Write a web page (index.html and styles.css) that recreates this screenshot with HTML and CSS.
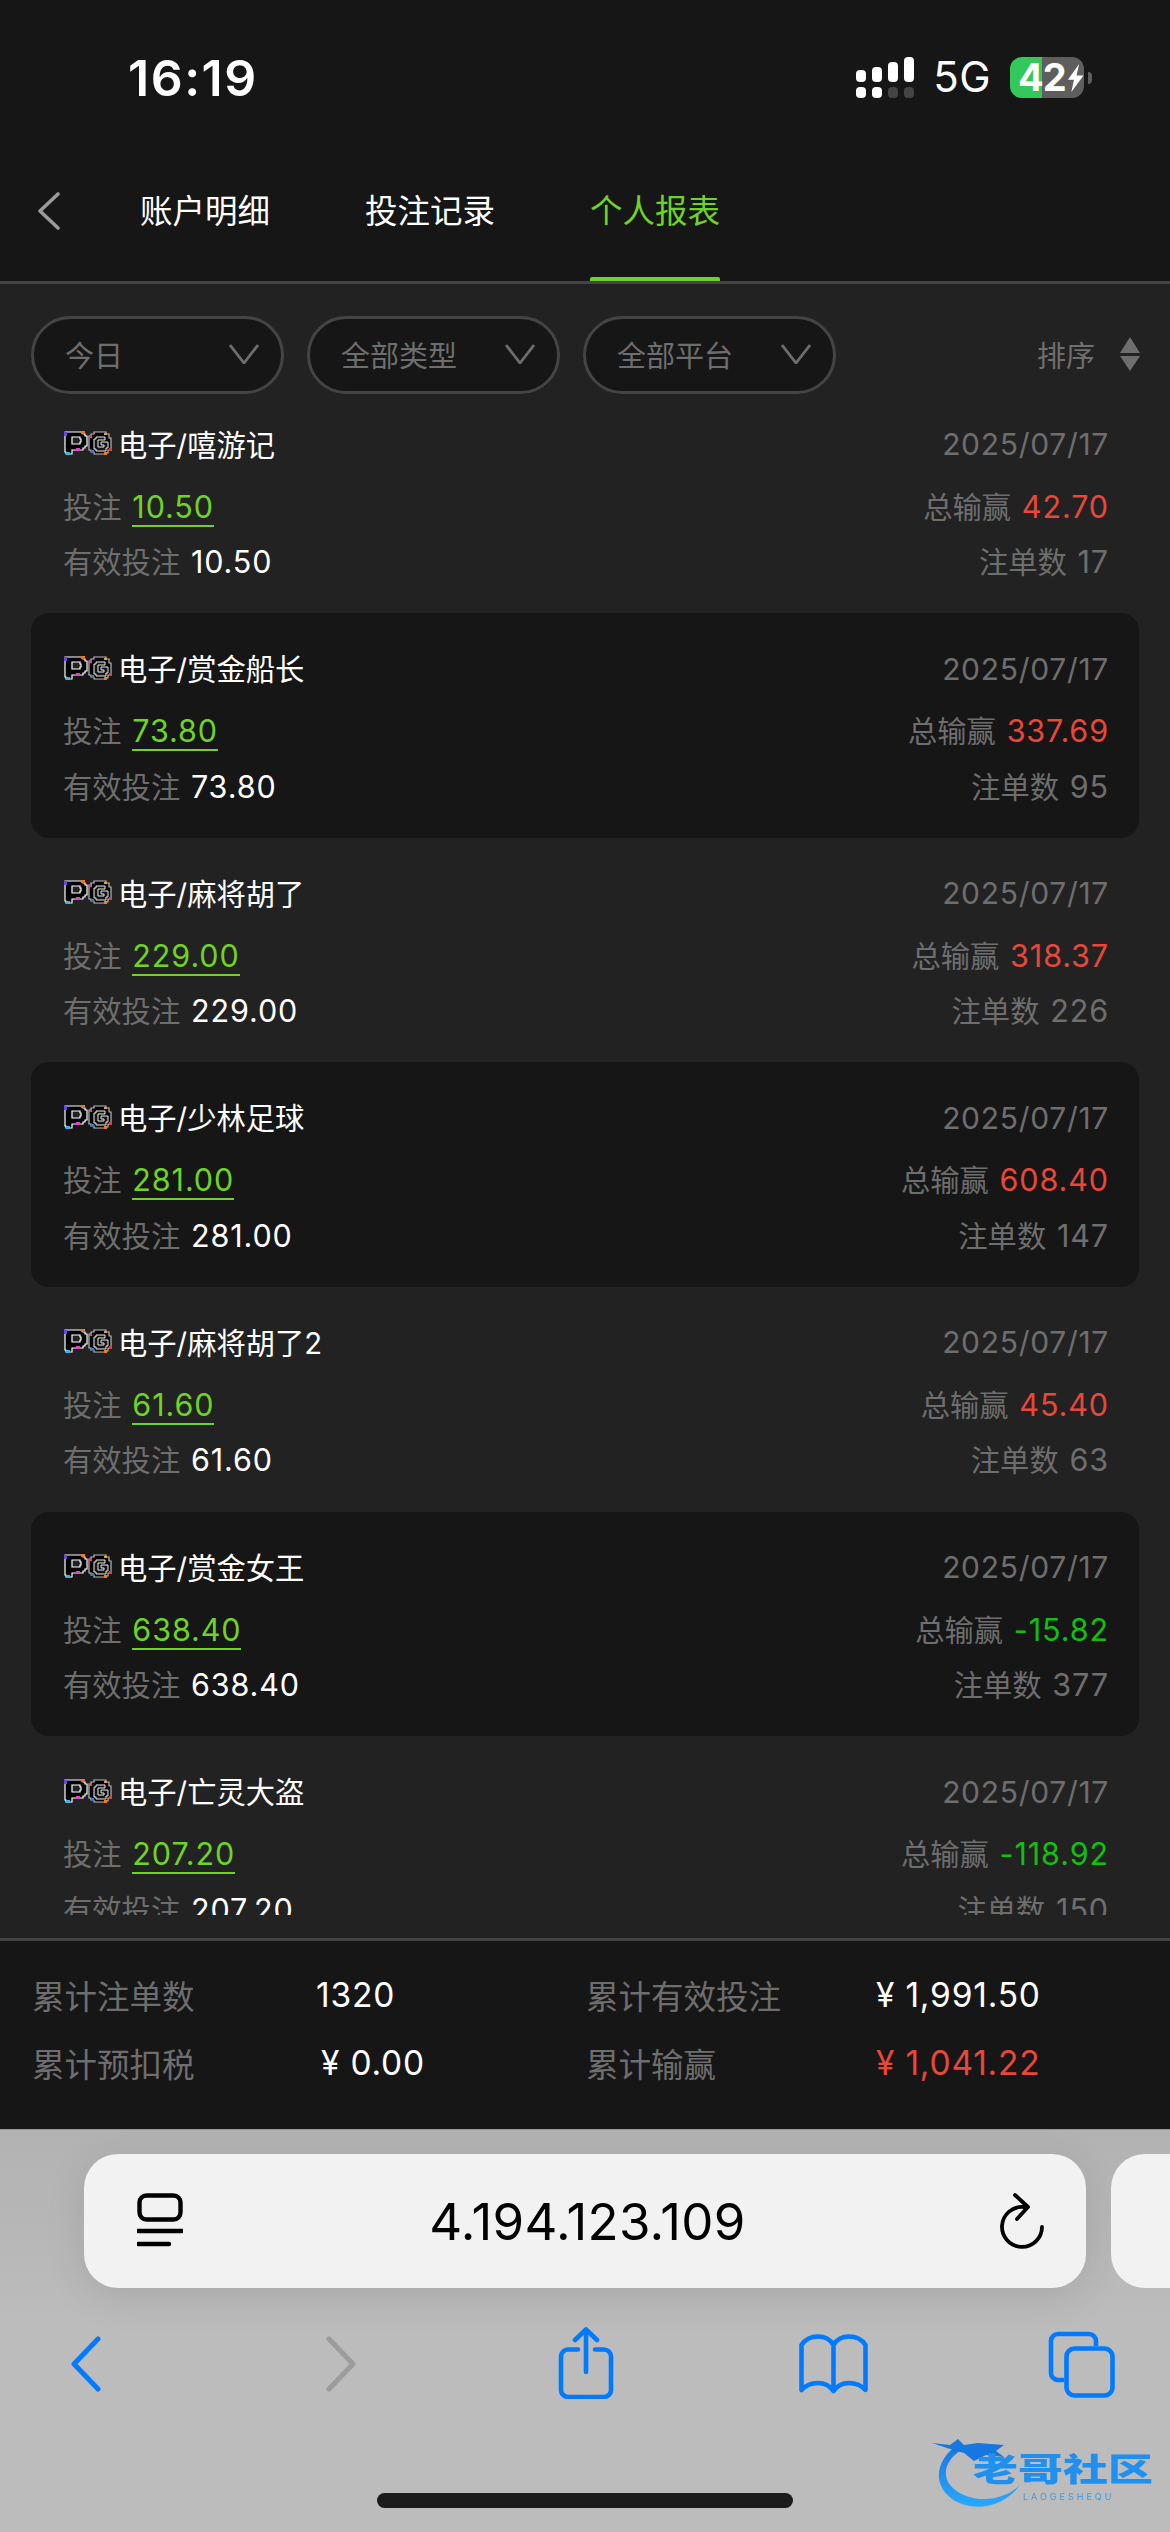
FILE: index.html
```html
<!DOCTYPE html>
<html lang="zh-CN">
<head>
<meta charset="utf-8">
<title>个人报表</title>
<link rel="stylesheet" href="styles.css">
</head>
<body>
<svg class="defs" width="0" height="0" aria-hidden="true">
  <defs>
    <symbol id="pg" viewBox="0 0 49 25">
      <path d="M2 2h18v2h2v2h2v10h-2v2h-2v2H9v4H3v-2H2z" fill="#000" stroke="#fff" stroke-width="1.2"/>
      <path d="M9 7h8v2h1v3h-1v2H9z" fill="#222" stroke="#fff" stroke-width="1.2"/>
      <path d="M31 2h12v2h3v4h2v12h-3v3h-3v1H31v-2h-3v-2h-2V6h2V4h3z" fill="#000" stroke="#bbb" stroke-width="1.2"/>
      <path d="M33 7h9v3h-7v7h6v-2h-3v-3h7v6h-2v3H33v-2h-2V9h2z" fill="#161616" stroke="#eee" stroke-width="1"/>
      <rect x="1" y="2" width="3" height="4" fill="#7a3df0"/>
      <rect x="18" y="1" width="4" height="3" fill="#f07a1a"/>
      <rect x="13" y="18" width="4" height="3" fill="#e83fd0"/>
      <rect x="3" y="22" width="4" height="3" fill="#38b6f0"/>
      <rect x="26" y="5" width="3" height="3" fill="#e83f9a"/>
      <rect x="28" y="20" width="3" height="3" fill="#2f7ae8"/>
      <rect x="46" y="18" width="3" height="3" fill="#e8402f"/>
      <rect x="41" y="22" width="3" height="3" fill="#f07a1a"/>
      <rect x="41" y="3" width="3" height="2" fill="#f0a01a"/>
    </symbol>
    <symbol id="chev" viewBox="0 0 30 20">
      <path d="M1 1 15 19 29 1" fill="none" stroke="#6e6e6e" stroke-width="2.8"/>
    </symbol>
    <linearGradient id="wm" x1="0" y1="0" x2="0" y2="1">
      <stop offset="0" stop-color="#1677e0"/>
      <stop offset="1" stop-color="#2aa8ff"/>
    </linearGradient>
  </defs>
</svg>

<div class="app-top">
  <div class="status">
    <span class="clock">16:19</span>
    <div class="status-right">
      <div class="signal">
        <div class="sig-col"><i class="s1"></i><b></b></div>
        <div class="sig-col"><i class="s2"></i><b></b></div>
        <div class="sig-col"><i class="s3"></i><b class="off"></b></div>
        <div class="sig-col"><i class="s4"></i><b class="off"></b></div>
      </div>
      <span class="net">5G</span>
      <div class="battery">
        <span class="batt-num">42</span>
        <svg class="bolt" width="20" height="32" viewBox="0 0 20 32"><path d="M14 0 1 18h7L5 32 19 13h-8z" fill="#fff"/></svg>
      </div>
      <span class="batt-tip"></span>
    </div>
  </div>
  <nav class="tabs">
    <svg class="back" width="24" height="38" viewBox="0 0 24 38"><path d="M21 2 3 19l18 17" fill="none" stroke="#9a9a9a" stroke-width="3.6" stroke-linecap="round" stroke-linejoin="round"/></svg>
    <a class="tab">账户明细</a>
    <a class="tab">投注记录</a>
    <a class="tab active">个人报表</a>
  </nav>
</div>

<div class="filters">
  <div class="pill"><span>今日</span><svg width="30" height="20"><use href="#chev"/></svg></div>
  <div class="pill"><span>全部类型</span><svg width="30" height="20"><use href="#chev"/></svg></div>
  <div class="pill"><span>全部平台</span><svg width="30" height="20"><use href="#chev"/></svg></div>
  <div class="sort">
    <span>排序</span>
    <svg width="20" height="34" viewBox="0 0 20 34"><path d="M10 0 20 16H0zM0 19h20L10 34z" fill="#6e6e6e"/></svg>
  </div>
</div>

<div class="list-wrap">
  <div class="list">
    <div class="list-inner">
      <section class="row">
        <div class="line head"><div class="title"><svg class="pg" width="49" height="25"><use href="#pg"/></svg><span>电子/嘻游记</span></div><span class="muted date">2025/07/17</span></div>
        <div class="line bet"><div><span class="muted">投注 </span><span class="num stake">10.50</span></div><div><span class="muted">总输赢 </span><span class="num win">42.70</span></div></div>
        <div class="line valid"><div><span class="muted">有效投注 </span><span class="num white">10.50</span></div><div class="muted">注单数 <span class="num">17</span></div></div>
      </section>
      <section class="row card">
        <div class="line head"><div class="title"><svg class="pg" width="49" height="25"><use href="#pg"/></svg><span>电子/赏金船长</span></div><span class="muted date">2025/07/17</span></div>
        <div class="line bet"><div><span class="muted">投注 </span><span class="num stake">73.80</span></div><div><span class="muted">总输赢 </span><span class="num win">337.69</span></div></div>
        <div class="line valid"><div><span class="muted">有效投注 </span><span class="num white">73.80</span></div><div class="muted">注单数 <span class="num">95</span></div></div>
      </section>
      <section class="row">
        <div class="line head"><div class="title"><svg class="pg" width="49" height="25"><use href="#pg"/></svg><span>电子/麻将胡了</span></div><span class="muted date">2025/07/17</span></div>
        <div class="line bet"><div><span class="muted">投注 </span><span class="num stake">229.00</span></div><div><span class="muted">总输赢 </span><span class="num win">318.37</span></div></div>
        <div class="line valid"><div><span class="muted">有效投注 </span><span class="num white">229.00</span></div><div class="muted">注单数 <span class="num">226</span></div></div>
      </section>
      <section class="row card">
        <div class="line head"><div class="title"><svg class="pg" width="49" height="25"><use href="#pg"/></svg><span>电子/少林足球</span></div><span class="muted date">2025/07/17</span></div>
        <div class="line bet"><div><span class="muted">投注 </span><span class="num stake">281.00</span></div><div><span class="muted">总输赢 </span><span class="num win">608.40</span></div></div>
        <div class="line valid"><div><span class="muted">有效投注 </span><span class="num white">281.00</span></div><div class="muted">注单数 <span class="num">147</span></div></div>
      </section>
      <section class="row">
        <div class="line head"><div class="title"><svg class="pg" width="49" height="25"><use href="#pg"/></svg><span>电子/麻将胡了2</span></div><span class="muted date">2025/07/17</span></div>
        <div class="line bet"><div><span class="muted">投注 </span><span class="num stake">61.60</span></div><div><span class="muted">总输赢 </span><span class="num win">45.40</span></div></div>
        <div class="line valid"><div><span class="muted">有效投注 </span><span class="num white">61.60</span></div><div class="muted">注单数 <span class="num">63</span></div></div>
      </section>
      <section class="row card">
        <div class="line head"><div class="title"><svg class="pg" width="49" height="25"><use href="#pg"/></svg><span>电子/赏金女王</span></div><span class="muted date">2025/07/17</span></div>
        <div class="line bet"><div><span class="muted">投注 </span><span class="num stake">638.40</span></div><div><span class="muted">总输赢 </span><span class="num loss">-15.82</span></div></div>
        <div class="line valid"><div><span class="muted">有效投注 </span><span class="num white">638.40</span></div><div class="muted">注单数 <span class="num">377</span></div></div>
      </section>
      <section class="row">
        <div class="line head"><div class="title"><svg class="pg" width="49" height="25"><use href="#pg"/></svg><span>电子/亡灵大盗</span></div><span class="muted date">2025/07/17</span></div>
        <div class="line bet"><div><span class="muted">投注 </span><span class="num stake">207.20</span></div><div><span class="muted">总输赢 </span><span class="num loss">-118.92</span></div></div>
        <div class="line valid"><div><span class="muted">有效投注 </span><span class="num white">207.20</span></div><div class="muted">注单数 <span class="num">150</span></div></div>
      </section>
    </div>
  </div>
</div>

<div class="totals">
  <span class="t-label">累计注单数</span><span class="t-val">1320</span>
  <span class="t-label">累计有效投注</span><span class="t-val">¥ 1,991.50</span>
  <span class="t-label">累计预扣税</span><span class="t-val t-tax">¥ 0.00</span>
  <span class="t-label">累计输赢</span><span class="t-val t-red">¥ 1,041.22</span>
</div>

<div class="browser">
  <div class="url-row">
    <div class="url-bar">
      <svg width="46" height="56" viewBox="0 0 46 56"><rect x="2.5" y="2.5" width="41" height="24" rx="7" fill="none" stroke="#000" stroke-width="4.4"/><path d="M1 38h44M1 51h31" stroke="#000" stroke-width="4.4" stroke-linecap="round"/></svg>
      <span class="url-text">4.194.123.109</span>
      <svg width="46" height="56" viewBox="0 0 46 56"><path d="M24 14A20 20 0 1 0 42 34" fill="none" stroke="#000" stroke-width="3.8" stroke-linecap="round"/><path d="M15 2 28 14 17 26" fill="none" stroke="#000" stroke-width="3.8" stroke-linecap="round" stroke-linejoin="round"/></svg>
    </div>
    <div class="url-next"></div>
  </div>
  <div class="tools">
    <svg class="t-back" width="30" height="72" viewBox="0 0 30 72"><path d="M27 12 3 37l24 25" fill="none" stroke="#007aff" stroke-width="5" stroke-linecap="round" stroke-linejoin="round"/></svg>
    <svg class="t-fwd" width="30" height="72" viewBox="0 0 30 72"><path d="M3 12 27 37 3 62" fill="none" stroke="#9c9c9c" stroke-width="5" stroke-linecap="round" stroke-linejoin="round"/></svg>
    <svg class="t-share" width="56" height="72" viewBox="0 0 56 72"><path d="M20 22.5H10a7 7 0 0 0-7 7V63a7 7 0 0 0 7 7h36a7 7 0 0 0 7-7V29.5a7 7 0 0 0-7-7H37M28 45V3M17 13 28 2.500 39 13" fill="none" stroke="#007aff" stroke-width="4.6" stroke-linecap="round" stroke-linejoin="round"/></svg>
    <svg class="t-book" width="71" height="72" viewBox="0 0 71 72"><path d="M3.500 63V18C8 11 14 9.500 20 9.500 27 9.500 32 12 35.500 18 39 12 44 9.500 51 9.500 57 9.500 63 11 67.500 18V63C63 58 57 56 51 56 44 56 39 59 35.500 64 32 59 27 56 20 56 14 56 8 58 3.500 63ZM35.500 18V64" fill="none" stroke="#007aff" stroke-width="4.6" stroke-linejoin="round"/></svg>
    <svg class="t-tabs" width="68" height="72" viewBox="0 0 68 72"><rect x="18.500" y="21.500" width="46" height="47" rx="8" fill="none" stroke="#007aff" stroke-width="4.6"/><path d="M16 53H10a7 7 0 0 1-7-7V14a7 7 0 0 1 7-7H41a7 7 0 0 1 7 7v5" fill="none" stroke="#007aff" stroke-width="4.6"/></svg>
  </div>
  <div class="home-bar"></div>
  <div class="mark">
    <svg width="225" height="78" viewBox="0 0 225 78"><path d="M28 12C8 24 0 50 22 66 40 78 70 78 90 52 72 70 40 70 24 56 10 44 14 26 36 14Z" fill="url(#wm)"/><path d="M2 10 20 12 28 6 34 12 48 10 74 12 66 18 74 24 56 22 44 28 34 20 20 16Z" fill="#1677e0"/></svg>
    <span class="mark-cn">老哥社区</span>
    <span class="mark-en">LAOGESHEQU</span>
  </div>
</div>
</body>
</html>
```
FILE: styles.css
```css
* { box-sizing: border-box; }

html, body { margin: 0; padding: 0; }

body {
  width: 1170px;
  height: 2532px;
  overflow: hidden;
  display: flex;
  flex-direction: column;
  background: #bcbcbc;
  color: #fff;
  font-family: Inter, "Noto Sans CJK SC", sans-serif;
}

.defs { position: absolute; }

/* status bar and page tabs */
.app-top {
  height: 284px;
  background: #161616;
  border-bottom: 3px solid #444;
  flex: none;
}

.status {
  height: 158px;
  display: flex;
  justify-content: space-between;
  padding: 44px 78px 0 128px;
}

.clock {
  font-size: 50px;
  font-weight: 600;
  line-height: 68px;
  letter-spacing: 1.500px;
}

.status-right {
  display: flex;
  align-items: flex-start;
  padding-top: 13px;
}

.signal { display: flex; gap: 6px; height: 41px; align-items: flex-end; }

.sig-col { display: flex; flex-direction: column; gap: 5px; width: 10px; }

.sig-col i { display: block; background: #fff; border-radius: 4px; }
.sig-col b { display: block; height: 11px; background: #fff; border-radius: 4px; }
.sig-col b.off { background: #444; }
.s1 { height: 12px; }
.s2 { height: 15px; }
.s3 { height: 20px; }
.s4 { height: 25px; }

.net {
  margin-left: 19px;
  font-size: 42px;
  line-height: 42px;
  margin-top: -1px;
  letter-spacing: 0.500px;
}

.battery {
  margin-left: 19px;
  width: 74px;
  height: 41px;
  border-radius: 12px;
  background: linear-gradient(90deg, #34c759 32px, #5e5e5e 32px);
  display: flex;
  align-items: center;
  padding-left: 8px;
  flex: none;
}

.batt-num {
  font-size: 38px;
  font-weight: 700;
  line-height: 41px;
  letter-spacing: -1px;
}

.bolt { margin-left: 1px; }

.batt-tip {
  width: 4px;
  height: 12px;
  margin: 15px 0 0 4px;
  background: #5e5e5e;
  border-radius: 0 6px 6px 0;
}

.tabs {
  height: 123px;
  display: flex;
  align-items: flex-start;
  padding-left: 37px;
  font-size: 32.500px;
}

.back { margin-top: 34px; margin-right: 79px; }

.tab {
  position: relative;
  width: 130px;
  margin-right: 95px;
  line-height: 44px;
  margin-top: 32px;
  height: 91px;
  white-space: nowrap;
}

.tab.active { color: #6fd325; }

.tab.active::after {
  content: "";
  position: absolute;
  left: 0;
  right: 0;
  bottom: 0;
  height: 4px;
  border-radius: 2px 2px 0 0;
  background: #6fd325;
}

/* filter row */
.filters {
  height: 132px;
  flex: none;
  background: #222;
  display: flex;
  align-items: flex-start;
  gap: 23px;
  padding: 32px 30px 0 31px;
}

.pill {
  width: 253px;
  height: 78px;
  background: #161616;
  border: 3px solid #444;
  border-radius: 39px;
  display: flex;
  align-items: center;
  justify-content: space-between;
  padding: 0 22px 3px 31px;
  font-size: 29px;
  color: #6e6e6e;
}

.sort {
  margin-left: auto;
  height: 78px;
  display: flex;
  align-items: center;
  gap: 25px;
  font-size: 29px;
  color: #6e6e6e;
  padding-bottom: 3px;
}

/* record list */
.list-wrap {
  height: 1522px;
  flex: none;
  background: #222;
  padding-bottom: 23px;
}

.list { height: 100%; overflow: hidden; }

.list-inner { margin-top: -27.400px; }

.row {
  height: 224.600px;
  margin: 0 31px;
  padding: 34px 30px 0 32px;
  border-radius: 18px;
  font-size: 29.300px;
}

.card { background: #161616; }

.line {
  display: flex;
  justify-content: space-between;
  align-items: center;
}

.head { height: 40px; }
.bet { height: 44px; margin-top: 20px; }
.valid { height: 44px; margin-top: 11.500px; }

.title { display: flex; align-items: center; }
.pg { margin-right: 6px; }

.muted { color: #6e6e6e; }
.date { font-size: 30px; letter-spacing: 0.700px; padding-top: 3px; }
.num { font-size: 30.500px; letter-spacing: 0.900px; margin-left: 2.500px; }
.white { color: #fff; }
.stake { color: #6fd325; border-bottom: 2.500px solid #6fd325; }
.win { color: #e8473a; }
.loss { color: #10c010; }

/* running totals */
.totals {
  height: 191px;
  flex: none;
  background: #161616;
  border-top: 3px solid #444;
  display: grid;
  grid-template-columns: 284px 270px 290px 1fr;
  grid-auto-rows: 68px;
  padding: 19px 0 0 32px;
  font-size: 32.500px;
  align-items: center;
}

.t-label { color: #6e6e6e; }
.t-val { font-size: 33.500px; letter-spacing: 0.800px; padding-top: 2px; }
.t-tax { margin-left: 5px; }
.t-red { color: #e8473a; }

/* browser chrome */
.browser {
  position: relative;
  flex: 1;
  background: linear-gradient(#b2b2b2, #bcbcbc 200px);
  border-top: 1px solid #999;
  overflow: hidden;
}

.url-row {
  display: flex;
  gap: 25px;
  padding: 24px 0 0 84px;
  width: 1400px;
}

.url-bar {
  flex: none;
  width: 1002px;
  height: 134px;
  background: #f2f2f2;
  border-radius: 34px;
  box-shadow: 0 8px 40px rgba(0, 0, 0, 0.1);
  display: flex;
  align-items: center;
  justify-content: space-between;
  padding: 0 40px 0 53px;
}

.url-text {
  color: #000;
  font-size: 51px;
  letter-spacing: 0.300px;
  margin-right: 8px;
}

.url-next {
  flex: none;
  width: 200px;
  height: 134px;
  background: #f2f2f2;
  border-radius: 34px;
}

.tools {
  display: flex;
  margin-top: 39px;
  padding-left: 71px;
}

.t-fwd { margin-left: 225px; }
.t-share { margin-left: 202px; }
.t-book { margin-left: 184px; }
.t-tabs { margin-left: 179px; }

.home-bar {
  width: 416px;
  height: 15px;
  margin: 94px auto 0;
  background: #1c1c1c;
  border-radius: 8px;
}

/* community watermark over the toolbar */
.mark {
  position: absolute;
  left: 930px;
  top: 303px;
  width: 225px;
  height: 78px;
  filter: blur(0.7px);
}

.mark svg { display: block; }

.mark-cn {
  position: absolute;
  left: 43px;
  top: 24px;
  font-size: 45px;
  line-height: 34px;
  font-weight: 900;
  white-space: nowrap;
  color: #1f8ff0;
  transform: scaleY(0.72);
  transform-origin: 0 0;
}

.mark-en {
  position: absolute;
  left: 93px;
  top: 59px;
  font-size: 9px;
  line-height: 10px;
  letter-spacing: 3px;
  color: #3a9ae8;
  white-space: nowrap;
}
```
